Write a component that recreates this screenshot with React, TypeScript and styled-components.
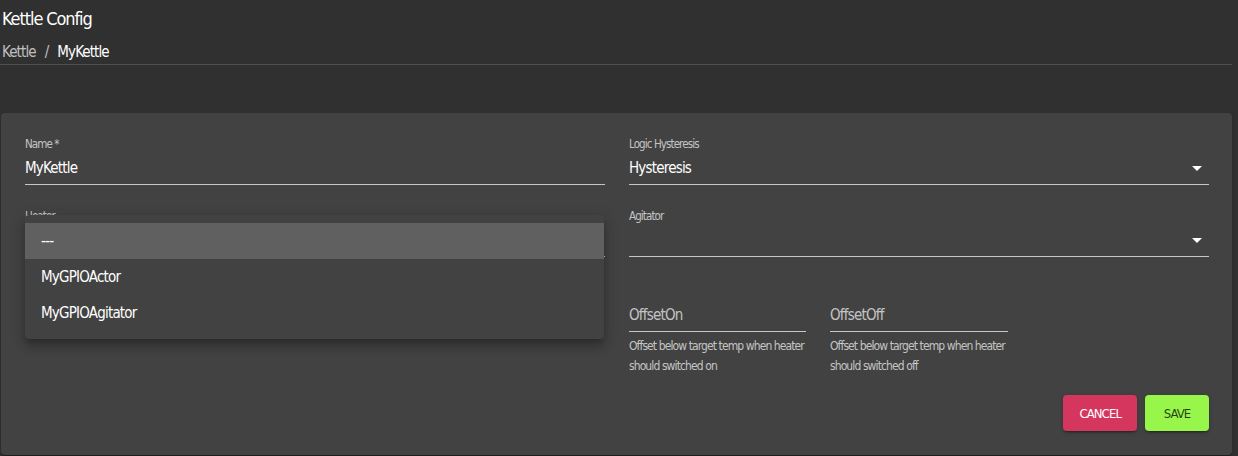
import React from "react";
import styled, { createGlobalStyle } from "styled-components";

const GlobalStyle = createGlobalStyle`
  html, body {
    margin: 0;
    padding: 0;
    background: #303030;
  }
  body {
    font-family: "DejaVu Sans Condensed", "DejaVu Sans", "Liberation Sans", sans-serif;
    font-stretch: condensed;
    color: #fff;
  }
  * { box-sizing: border-box; }
`;

const Page = styled.div`
  padding: 0 6px 0 0;
  min-height: 456px;
`;

const Title = styled.h1`
  margin: 0 0 0 2px;
  padding-top: 4px;
  font-size: 18px;
  letter-spacing: -1.1px;
  line-height: 30px;
  font-weight: 400;
  color: #fff;
`;

const Crumbs = styled.nav`
  display: flex;
  align-items: center;
  margin: 6px 0 0 2px;
  font-size: 15px;
  letter-spacing: -0.9px;
  line-height: 24px;
`;

const Crumb = styled.span<{ $current?: boolean }>`
  color: ${(p) => (p.$current ? "#fff" : "rgba(255,255,255,0.7)")};
`;

const Sep = styled.span`
  margin: 0 9px 0 9px;
  color: rgba(255, 255, 255, 0.7);
`;

const Divider = styled.hr`
  margin: 0;
  border: none;
  height: 1px;
  background: #505050;
`;

const Card = styled.section`
  margin: 48px 0 0 1px;
  background: #424242;
  border-radius: 4px;
  box-shadow: 0 2px 1px -1px rgba(0, 0, 0, 0.2), 0 1px 1px 0 rgba(0, 0, 0, 0.14),
    0 1px 3px 0 rgba(0, 0, 0, 0.12);
  padding: 23px 23px 24px 24px;
`;

const FormGrid = styled.div`
  display: grid;
  grid-template-columns: 580px 580px;
  column-gap: 24px;
  row-gap: 23px;
`;

const Field = styled.div<{ $width?: number }>`
  position: relative;
  display: flex;
  flex-direction: column;
  width: ${(p) => (p.$width ? `${p.$width}px` : "100%")};
`;

const Label = styled.label`
  display: block;
  height: 16px;
  font-size: 11.5px;
  letter-spacing: -0.9px;
  line-height: 16px;
  color: rgba(255, 255, 255, 0.7);
`;

const InputBox = styled.div`
  position: relative;
  height: 33px;
  padding: 7px 0 7px;
  font-size: 15px;
  letter-spacing: -0.8px;
  line-height: 19px;
  color: #fff;
  border-bottom: 1px solid rgba(255, 255, 255, 0.7);
`;

const Placeholder = styled.span`
  color: rgba(255, 255, 255, 0.7);
`;

const ArrowIcon = styled.svg`
  position: absolute;
  right: 0;
  top: calc(50% - 12px);
  width: 24px;
  height: 24px;
  fill: #fff;
`;

const Helper = styled.p`
  margin: 5px 0 0;
  font-size: 12px;
  letter-spacing: -0.9px;
  line-height: 19.5px;
  color: rgba(255, 255, 255, 0.7);
`;

const OffsetGroup = styled.div`
  display: flex;
  gap: 24px;
  margin-top: 3px;
`;

const Menu = styled.ul`
  position: absolute;
  top: 7px;
  left: 0;
  width: 579px;
  margin: 0;
  padding: 8px 0;
  list-style: none;
  background: #424242;
  border-radius: 4px;
  box-shadow: 0 5px 5px -3px rgba(0, 0, 0, 0.2), 0 8px 10px 1px rgba(0, 0, 0, 0.14),
    0 3px 14px 2px rgba(0, 0, 0, 0.12);
  z-index: 10;
`;

const MenuItem = styled.li<{ $selected?: boolean }>`
  height: 36px;
  padding: 6px 16px;
  font-size: 15px;
  letter-spacing: -0.8px;
  line-height: 24px;
  color: #fff;
  background: ${(p) => (p.$selected ? "rgba(255,255,255,0.16)" : "transparent")};
`;

const Actions = styled.div`
  grid-column: 1 / -1;
  display: flex;
  justify-content: flex-end;
  gap: 8px;
  margin-top: -4px;
`;

const Button = styled.button<{ $variant: "cancel" | "save" }>`
  min-width: 64px;
  height: 36px;
  padding: 6px 16px;
  border: none;
  border-radius: 4px;
  font-family: inherit;
  font-stretch: condensed;
  font-size: 13px;
  letter-spacing: -0.9px;
  text-transform: uppercase;
  cursor: pointer;
  background: ${(p) => (p.$variant === "cancel" ? "#d5365e" : "#98f64b")};
  color: ${(p) => (p.$variant === "cancel" ? "#fff" : "rgba(0,0,0,0.75)")};
  box-shadow: 0 3px 1px -2px rgba(0, 0, 0, 0.2), 0 2px 2px 0 rgba(0, 0, 0, 0.14),
    0 1px 5px 0 rgba(0, 0, 0, 0.12);
`;

const DropArrow = () => (
  <ArrowIcon viewBox="0 0 24 24">
    <path d="M7 10l5 5 5-5z" />
  </ArrowIcon>
);

export default function App() {
  return (
    <>
      <GlobalStyle />
      <Page>
        <Title>Kettle Config</Title>
        <Crumbs>
          <Crumb>Kettle</Crumb>
          <Sep>/</Sep>
          <Crumb $current>MyKettle</Crumb>
        </Crumbs>
        <Divider />
        <Card>
          <FormGrid>
            <Field>
              <Label>Name *</Label>
              <InputBox>MyKettle</InputBox>
            </Field>
            <Field>
              <Label>Logic Hysteresis</Label>
              <InputBox>
                Hysteresis
                <DropArrow />
              </InputBox>
            </Field>
            <Field>
              <Label>Heater</Label>
              <InputBox>
                <DropArrow />
              </InputBox>
              <Menu>
                <MenuItem $selected>---</MenuItem>
                <MenuItem>MyGPIOActor</MenuItem>
                <MenuItem>MyGPIOAgitator</MenuItem>
              </Menu>
            </Field>
            <Field>
              <Label>Agitator</Label>
              <InputBox>
                <DropArrow />
              </InputBox>
            </Field>
            <div />
            <OffsetGroup>
              <Field $width={177}>
                <Label />
                <InputBox>
                  <Placeholder>OffsetOn</Placeholder>
                </InputBox>
                <Helper>Offset below target temp when heater should switched on</Helper>
              </Field>
              <Field $width={178}>
                <Label />
                <InputBox>
                  <Placeholder>OffsetOff</Placeholder>
                </InputBox>
                <Helper>Offset below target temp when heater should switched off</Helper>
              </Field>
            </OffsetGroup>
            <Actions>
              <Button $variant="cancel">Cancel</Button>
              <Button $variant="save">Save</Button>
            </Actions>
          </FormGrid>
        </Card>
      </Page>
    </>
  );
}
